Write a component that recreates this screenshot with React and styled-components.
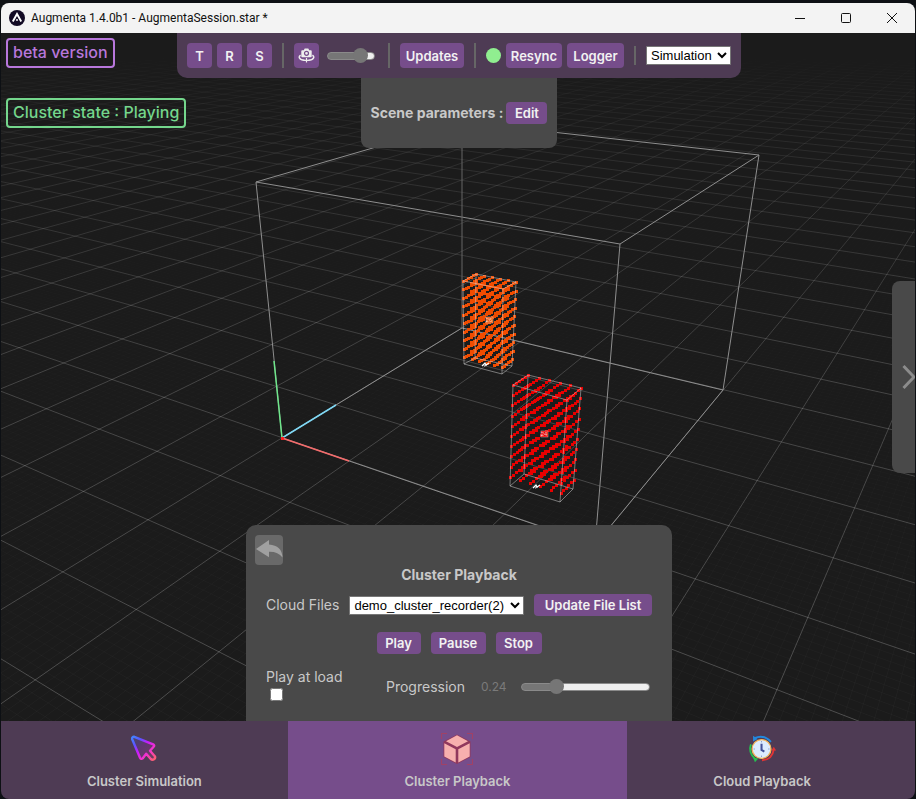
import React, { useState } from "react";
import styled, { createGlobalStyle } from "styled-components";

const GlobalStyle = createGlobalStyle`
  *, *::before, *::after { box-sizing: border-box; }
  html, body, #root { height: 100%; margin: 0; }
  body { background: #0d1014; overflow: hidden; }
  button, select, input { font: inherit; margin: 0; }
`;

const uiFont = `Inter, "Open Sans", sans-serif`;
const color = {
  bar: "#4e3b54",
  accent: "#764d8b",
  panel: "#494949",
  text: "#c8c8c8",
  muted: "#7a7a7a",
};

/* ---------- window ---------- */

const Window = styled.div`
  display: flex;
  flex-direction: column;
  height: 100vh;
  padding: 3px 1px 0;
  background: #0d1014;
  font-family: ${uiFont};
  font-size: 14px;
  color: ${color.text};
`;

const TitleBar = styled.header`
  display: flex;
  align-items: center;
  flex: none;
  height: 30px;
  padding-left: 8px;
  background: #f3f3f3;
  border-radius: 8px 8px 0 0;
  color: #111;
`;

const WindowTitle = styled.h1`
  flex: 1;
  margin: 0 0 0 6px;
  font: 400 12px/16px Roboto, "Noto Sans", sans-serif;
`;

const WindowButton = styled.button`
  display: flex;
  align-items: center;
  justify-content: center;
  width: 46px;
  height: 30px;
  padding: 0;
  border: 0;
  background: none;
  color: #111;
`;

const Stage = styled.main`
  flex: 1;
  min-height: 0;
  display: grid;
  grid-template: minmax(0, 1fr) / minmax(0, 1fr);
  background: #1b1b1b;
  > * { grid-area: 1 / 1; }
`;

const SceneView = styled.svg`
  display: block;
  width: 100%;
  height: 100%;
`;

/* ---------- shared controls ---------- */

const Button = styled.button`
  display: flex;
  align-items: center;
  justify-content: center;
  min-width: ${(p) => p.$width || 25}px;
  height: ${(p) => (p.$compact ? 22 : 25)}px;
  padding: 0;
  border: 0;
  border-radius: 4px;
  background: ${color.accent};
  color: #f2f2f2;
  font-size: 13px;
  font-weight: 600;
  line-height: 16px;
  white-space: nowrap;
`;

const Select = styled.select`
  width: ${(p) => p.$width}px;
  height: 19px;
  padding: 0;
  border: 1px solid #777;
  border-radius: 1px;
  background: #fff;
  color: #000;
  font-family: "Liberation Sans", Arial, sans-serif;
  font-size: 13px;
`;

const Range = styled.input`
  appearance: none;
  width: ${(p) => p.$width}px;
  height: 15px;
  background: none;
  &::-webkit-slider-runnable-track {
    height: 8px;
    border: 1px solid #8a8a8a;
    border-radius: 4px;
    background: linear-gradient(to right, #767676 ${(p) => p.$fill}%, #efefef ${(p) => p.$fill}%);
  }
  &::-webkit-slider-thumb {
    appearance: none;
    width: 15px;
    height: 15px;
    margin-top: -5px;
    border-radius: 50%;
    background: #767676;
  }
`;

/* ---------- overlays ---------- */

const StatusList = styled.div`
  justify-self: start;
  align-self: start;
  display: flex;
  flex-direction: column;
  align-items: flex-start;
  gap: 30px;
  padding: 5px;
`;

const StatusBadge = styled.div`
  height: 30px;
  padding: 0 5px;
  border: 2px solid;
  border-radius: 4px;
  color: ${(p) => p.$tone};
  font-size: 16px;
  font-weight: 500;
  line-height: 24px;
  white-space: nowrap;
`;

const TopStack = styled.div`
  justify-self: center;
  align-self: start;
  display: flex;
  flex-direction: column;
  align-items: center;
  margin-left: 2px;
`;

const Toolbar = styled.div`
  display: flex;
  align-items: center;
  gap: 10px;
  height: 45px;
  padding: 0 10px;
  border-radius: 0 0 10px 10px;
  background: ${color.bar};
`;

const ToolGroup = styled.div`
  display: flex;
  align-items: center;
  gap: 5px;
`;

const CameraGroup = styled(ToolGroup)`
  gap: 8px;
  padding-right: 3px;
`;

const Separator = styled.span`
  width: 2px;
  height: ${(p) => (p.$short ? 19 : 25)}px;
  background: #666;
`;

const SyncLight = styled.span`
  width: 15px;
  height: 15px;
  border-radius: 50%;
  background: #90ee90;
`;

const ScenePanel = styled.section`
  display: flex;
  align-items: center;
  justify-content: center;
  gap: 3px;
  height: 70px;
  padding: 0 10px;
  border-radius: 0 0 8px 8px;
  background: ${color.panel};
`;

const Heading = styled.h2`
  margin: 0;
  font-size: 14px;
  font-weight: 700;
  line-height: 18px;
  text-align: center;
  white-space: nowrap;
`;

const SideDrawer = styled.button`
  justify-self: end;
  align-self: center;
  display: flex;
  align-items: center;
  justify-content: flex-end;
  width: 23px;
  height: 192px;
  padding: 0;
  border: 0;
  border-radius: 8px 0 0 8px;
  background: ${color.panel};
`;

/* ---------- playback panel ---------- */

const PlaybackPanel = styled.section`
  justify-self: center;
  align-self: end;
  width: 426px;
  max-width: 100%;
  margin-left: 2px;
  padding: 10px 20px 20px;
  border-radius: 10px 10px 0 0;
  background: ${color.panel};
`;

const BackButton = styled.button`
  display: block;
  width: 28px;
  height: 30px;
  margin: 0 0 1px -11px;
  padding: 0;
  border: 0;
  border-radius: 4px;
  background: #696969;
`;

const Row = styled.div`
  display: flex;
  align-items: center;
  justify-content: ${(p) => (p.$center ? "center" : "space-between")};
  gap: 10px;
  margin-top: ${(p) => p.$top}px;
`;

const Label = styled.label`
  font-size: 14px;
  line-height: 18px;
  white-space: nowrap;
`;

const CheckField = styled.div`
  display: flex;
  flex-direction: column;
  align-items: flex-start;
  gap: 2px;
`;

const CheckBox = styled.input`
  width: 13px;
  height: 13px;
  && { margin: 0 4px; }
`;

const ProgressField = styled.div`
  display: flex;
  align-items: center;
  gap: 16px;
  padding: 4px 2px 0 0;
`;

const Value = styled.output`
  width: 24px;
  color: ${color.muted};
  font-size: 12px;
`;

/* ---------- bottom navigation ---------- */

const Tabs = styled.nav`
  flex: none;
  display: grid;
  grid-template-columns: 17fr 20fr 17fr;
  height: 78px;
  border-radius: 0 0 8px 8px;
  overflow: hidden;
`;

const Tab = styled.button`
  display: flex;
  flex-direction: column;
  align-items: center;
  gap: 7px;
  padding: 12px 0 0;
  border: 0;
  border-right: 1px solid ${color.accent};
  background: ${(p) => (p.$active ? color.accent : color.bar)};
  color: ${color.text};
  font-size: 13px;
  font-weight: 600;
  line-height: 18px;
  &:last-child {
    border-right: 0;
    padding-right: 18px;
  }
`;

/* ---------- scene drawing ---------- */

// Ground plane to view coordinates.
const depth = (x, z) => 1 - 0.0443 * x + 0.0707 * z;
const project = (x, z) => {
  const w = depth(x, z);
  return [(282.3 + 51.8 * x + 77.6 * z) / w, (437.7 + 2.6 * x - 4.3 * z) / w];
};
const pair = ([x, y]) => `${x.toFixed(1)} ${y.toFixed(1)}`;

function gridPath(step, range) {
  const near = 0.45;
  let d = "";
  for (let i = -range / step; i <= range / step; i++) {
    const k = i * step;
    const zMin = Math.max(-range, (near - 1 + 0.0443 * k) / 0.0707);
    if (zMin < range) d += `M${pair(project(k, zMin))}L${pair(project(k, range))}`;
    const xMax = Math.min(range, (1 + 0.0707 * k - near) / 0.0443);
    if (xMax > -range) d += `M${pair(project(-range, k))}L${pair(project(xMax, k))}`;
  }
  return d;
}
const majorGrid = gridPath(1, 70);
const minorGrid = gridPath(0.1, 14);

const clusters = [
  {
    id: "26", fill: "#f04c00", rows: 10, bottom: 0.92, label: [489, 323], mark: [485, 366],
    top: [[463, 281], [503, 289], [516, 282], [476, 274]],
    base: [[464, 364], [502, 374], [512, 366], [475, 358]],
  },
  {
    id: "24", fill: "#e80000", rows: 10, bottom: 0.91, label: [544, 437], mark: [536, 488],
    top: [[513, 385], [567, 400], [581, 388], [528, 375]],
    base: [[510, 486], [560, 502], [573, 489], [524, 474]],
  },
];

const mix = (a, b, t) => [a[0] + (b[0] - a[0]) * t, a[1] + (b[1] - a[1]) * t];

function clusterDots({ top, base, rows, bottom }) {
  let d = "";
  for (let r = 0; r < rows; r++) {
    const t = (r / (rows - 1)) * bottom;
    const c = top.map((p, i) => mix(p, base[i], t));
    for (let col = 0; col < 6; col++) {
      const front = mix(c[0], c[1], col / 5);
      const back = mix(c[3], c[2], col / 5);
      for (let k = 0; k < 6; k++) {
        const [x, y] = mix(front, back, k / 5);
        d += `M${Math.round(x - 1)} ${Math.round(y - 1)}h3v3h-3z`;
      }
    }
  }
  return d;
}

const poly = (pts) => pts.map((p) => p.join(",")).join(" ");

function Cluster({ data }) {
  const { top, base, fill, id, label, mark } = data;
  return (
    <g>
      <path d={clusterDots(data)} fill={fill} shapeRendering="crispEdges" />
      <g fill="none" stroke="#ddd" strokeOpacity="0.6" strokeWidth="0.8">
        <polygon points={poly(top)} />
        <polygon points={poly(base)} />
        {top.map((p, i) => (
          <line key={i} x1={p[0]} y1={p[1]} x2={base[i][0]} y2={base[i][1]} />
        ))}
      </g>
      <rect x={label[0] - 3} y={label[1] - 6} width="7" height="6" fill={fill} stroke="#fff" strokeOpacity="0.6" strokeWidth="0.6" />
      <text x={label[0]} y={label[1] - 1} fontFamily="Liberation Sans, sans-serif" fontSize="6" fill="#fff" fillOpacity="0.8" textAnchor="middle">{id}</text>
      <path d={`M${mark[0] - 3} ${mark[1]}l3-3 1 2 3-2M${mark[0] - 1} ${mark[1]}l3-1`} fill="none" stroke="#fff" strokeWidth="1.2" />
    </g>
  );
}

function Scene() {
  return (
    <SceneView viewBox="1 33 914 688" preserveAspectRatio="xMidYMid slice" role="img" aria-label="3D scene">
      <defs>
        <linearGradient id="fade" x1="0" y1="0" x2="0" y2="1">
          <stop offset="0.03" stopColor="#000" />
          <stop offset="0.2" stopColor="#6a6a6a" />
          <stop offset="0.5" stopColor="#ccc" />
          <stop offset="1" stopColor="#eee" />
        </linearGradient>
        <linearGradient id="minorFade" x1="0" y1="0" x2="0" y2="1">
          <stop offset="0.1" stopColor="#000" />
          <stop offset="0.6" stopColor="#888" />
          <stop offset="1" stopColor="#fff" />
        </linearGradient>
        <mask id="haze" maskUnits="userSpaceOnUse" x="1" y="33" width="914" height="688">
          <rect x="1" y="33" width="914" height="688" fill="url(#fade)" />
        </mask>
        <mask id="minorHaze" maskUnits="userSpaceOnUse" x="1" y="33" width="914" height="688">
          <rect x="1" y="33" width="914" height="688" fill="url(#minorFade)" />
        </mask>
      </defs>
      <rect x="1" y="33" width="914" height="688" fill="#1b1b1b" />
      <path d={minorGrid} fill="none" stroke="#fff" strokeOpacity="0.04" strokeWidth="0.8" mask="url(#minorHaze)" />
      <path d={majorGrid} fill="none" stroke="#fff" strokeOpacity="0.22" mask="url(#haze)" />
      <g fill="none" stroke="#8e8e8e" strokeWidth="1">
        <polygon points="282,438 595,545 723,390 462,328" />
        <polygon points="256,182 620,244 759,155 462,122" />
        <path d="M282 438L256 182M595 545L620 244M723 390L759 155" />
        <path d="M462 328V122" stroke="#666" />
      </g>
      <g fill="none" strokeWidth="1.5">
        <path d="M282 438L336 405" stroke="#7fd8f5" />
        <path d="M282 438L274 361" stroke="#6ee58a" />
        <path d="M282 438L349 461" stroke="#f46a6a" />
      </g>
      <rect x="281" y="437" width="3" height="3" fill="#f22" />
      {clusters.map((c) => <Cluster key={c.id} data={c} />)}
    </SceneView>
  );
}

/* ---------- icons ---------- */

const AppLogo = () => (
  <svg width="16" height="16" viewBox="0 0 16 16" aria-hidden="true">
    <circle cx="8" cy="8" r="8" fill="#120a24" />
    <path d="M3.8 11.5L8 4l4.2 7.5M8 9.2v1.6" fill="none" stroke="#fff" strokeWidth="1.9" />
  </svg>
);

const CameraIcon = () => (
  <svg width="17" height="17" viewBox="0 0 17 17" aria-hidden="true">
    <path d="M4.2 3.2h1.6L6.7 1.6h3.6l.9 1.6h1.6a.9.9 0 0 1 .9.9v5.2a.9.9 0 0 1-.9.9H4.2a.9.9 0 0 1-.9-.9V4.1a.9.9 0 0 1 .9-.9z" fill="#eee" />
    <circle cx="8.5" cy="6.3" r="2" fill="none" stroke={color.accent} strokeWidth="1.2" />
    <path d="M2.6 8.2C.2 9.800 1 13 6.400 13.300M14.400 8.200c2.400 1.600 1.600 4.800-3.800 5.100" fill="none" stroke="#eee" strokeWidth="1.500" />
    <path d="M5.400 13.300h6M8.500 11v4.600" fill="none" stroke="#eee" strokeWidth="1.200" />
  </svg>
);

const BackIcon = () => (
  <svg width="28" height="30" viewBox="0 0 28 30" aria-hidden="true">
    <path d="M1 14L14 5v4.500Q27 10.500 27.500 22.500Q23 16.500 14 16.800V22.300Z" fill="#a0a0a0" />
  </svg>
);

const ChevronIcon = () => (
  <svg width="13" height="26" viewBox="0 0 13 26" aria-hidden="true">
    <path d="M1.500 2L12 13L1.500 24" fill="none" stroke="#8c8c8c" strokeWidth="3" />
  </svg>
);

const CursorIcon = () => (
  <svg width="32" height="32" viewBox="0 0 32 32" aria-hidden="true">
    <defs>
      <linearGradient id="cursor" x1="3" y1="3" x2="28" y2="28" gradientUnits="userSpaceOnUse">
        <stop offset="0" stopColor="#3f8cff" />
        <stop offset="0.25" stopColor="#5a55ff" />
        <stop offset="0.45" stopColor="#c71cff" />
        <stop offset="0.7" stopColor="#f535c8" />
        <stop offset="1" stopColor="#ff6a5e" />
      </linearGradient>
    </defs>
    <path
      d="M6.300 3.800L25.200 11.300Q27 12.300 25.600 13.800L22 17.800L26.800 23.200Q27.800 25 26 26.300Q24.300 27.400 22.800 26L18.200 20.700L14.800 25.300Q13 26.700 12 24.700L4.100 6Q4 3.600 6.300 3.800Z"
      fill="url(#cursor)" fillOpacity="0.16" stroke="url(#cursor)" strokeWidth="2.400" strokeLinejoin="round"
    />
  </svg>
);

const CubeIcon = () => (
  <svg width="32" height="32" viewBox="0 0 32 32" aria-hidden="true">
    <path d="M.5 6V.5H6M26 .5h5.500V6M31.500 26v5.500H26M6 31.500H.5V26" fill="none" stroke="#c03a4c" strokeOpacity="0.6" />
    <path d="M16 1.500L29.500 8.500V24L16 31L2.500 24V8.500Z" fill="#91385d" />
    <path d="M16 2.300L27 8.300L16 13.900L5 8.300Z M3.300 10.300L14.700 16.300V29.500L3.300 23.400Z M28.700 10.300L17.300 16.300V29.500L28.700 23.400Z" fill="#f7b0ae" />
  </svg>
);

const ClockIcon = () => (
  <svg width="32" height="32" viewBox="-1 -1 34 34" aria-hidden="true">
    <g fill="none" strokeWidth="2">
      <path d="M8 4.500Q18 0 25.500 8.500" stroke="#2288dd" />
      <path d="M28.500 16.500Q27 27.500 16 28" stroke="#e03535" />
      <path d="M4.200 11Q1 19.500 9 27" stroke="#25c050" />
    </g>
    <path d="M6.500 2v6l5-2.500z" fill="#2288dd" />
    <path d="M26 17.500h5l-2.500-4z" fill="#e03535" />
    <path d="M6.500 25l5.500 1-3.500 4z" fill="#25c050" />
    <circle cx="15.500" cy="16" r="10" fill="#dcecff" stroke="#f2b65c" strokeWidth="1.400" />
    <path d="M15.500 7.500v1.500M15.500 23v1.500M7 16h1.500M22.500 16H24" stroke="#8da0c8" />
    <path d="M15.500 10.500v6.500l3 1.800" fill="none" stroke="#44539a" strokeWidth="2.200" />
  </svg>
);

/* ---------- page ---------- */

const tabs = [
  { name: "Cluster Simulation", Icon: CursorIcon },
  { name: "Cluster Playback", Icon: CubeIcon },
  { name: "Cloud Playback", Icon: ClockIcon },
];

export default function App() {
  const [active, setActive] = useState("Cluster Playback");
  const [speed, setSpeed] = useState(0.82);
  const [progress, setProgress] = useState(0.24);
  const [playAtLoad, setPlayAtLoad] = useState(false);

  return (
    <>
      <GlobalStyle />
      <Window>
        <TitleBar>
          <AppLogo />
          <WindowTitle>Augmenta 1.4.0b1 - AugmentaSession.star *</WindowTitle>
          <WindowButton aria-label="Minimize">
            <svg width="12" height="12" viewBox="0 0 12 12"><path d="M1 6.500h10" stroke="currentColor" /></svg>
          </WindowButton>
          <WindowButton aria-label="Maximize">
            <svg width="12" height="12" viewBox="0 0 12 12"><rect x="1.500" y="1.500" width="9" height="9" rx="1" fill="none" stroke="currentColor" /></svg>
          </WindowButton>
          <WindowButton aria-label="Close">
            <svg width="12" height="12" viewBox="0 0 12 12"><path d="M1 1l10 10M11 1L1 11" stroke="currentColor" /></svg>
          </WindowButton>
        </TitleBar>

        <Stage>
          <Scene />

          <StatusList>
            <StatusBadge $tone="#b877dc">beta version</StatusBadge>
            <StatusBadge $tone="#74d68c">Cluster state : Playing</StatusBadge>
          </StatusList>

          <TopStack>
            <Toolbar>
              <ToolGroup>
                <Button>T</Button>
                <Button>R</Button>
                <Button>S</Button>
              </ToolGroup>
              <Separator />
              <CameraGroup>
                <Button aria-label="Rotate camera"><CameraIcon /></Button>
                <Range
                  type="range" min="0" max="1" step="0.01" aria-label="Camera speed"
                  $width={48} $fill={75} value={speed}
                  onChange={(e) => setSpeed(Number(e.target.value))}
                />
              </CameraGroup>
              <Separator />
              <Button $width={64}>Updates</Button>
              <Separator />
              <ToolGroup>
                <SyncLight />
                <Button $width={56}>Resync</Button>
                <Button $width={57}>Logger</Button>
              </ToolGroup>
              <Separator $short />
              <Select $width={85} aria-label="Mode" defaultValue="Simulation">
                <option>Simulation</option>
              </Select>
            </Toolbar>
            <ScenePanel>
              <Heading>Scene parameters :</Heading>
              <Button $compact $width={41}>Edit</Button>
            </ScenePanel>
          </TopStack>

          <SideDrawer aria-label="Open side panel"><ChevronIcon /></SideDrawer>

          <PlaybackPanel>
            <BackButton aria-label="Back"><BackIcon /></BackButton>
            <Heading>Cluster Playback</Heading>
            <Row $top={10}>
              <Label htmlFor="cloud-file">Cloud Files</Label>
              <Select id="cloud-file" $width={175} defaultValue="demo_cluster_recorder(2)">
                <option>demo_cluster_recorder(2)</option>
              </Select>
              <Button $compact $width={118}>Update File List</Button>
            </Row>
            <Row $center $top={16}>
              <Button $compact $width={44}>Play</Button>
              <Button $compact $width={55}>Pause</Button>
              <Button $compact $width={46}>Stop</Button>
            </Row>
            <Row $top={14}>
              <CheckField>
                <Label htmlFor="play-at-load">Play at load</Label>
                <CheckBox
                  id="play-at-load" type="checkbox" checked={playAtLoad}
                  onChange={(e) => setPlayAtLoad(e.target.checked)}
                />
              </CheckField>
              <ProgressField>
                <Label htmlFor="progression">Progression</Label>
                <Value htmlFor="progression">{progress.toFixed(2)}</Value>
                <Range
                  id="progression" type="range" min="0" max="1" step="0.01"
                  $width={129} $fill={progress * 88 + 6} value={progress}
                  onChange={(e) => setProgress(Number(e.target.value))}
                />
              </ProgressField>
            </Row>
          </PlaybackPanel>
        </Stage>

        <Tabs>
          {tabs.map(({ name, Icon }) => (
            <Tab key={name} $active={name === active} onClick={() => setActive(name)}>
              <Icon />
              {name}
            </Tab>
          ))}
        </Tabs>
      </Window>
    </>
  );
}
